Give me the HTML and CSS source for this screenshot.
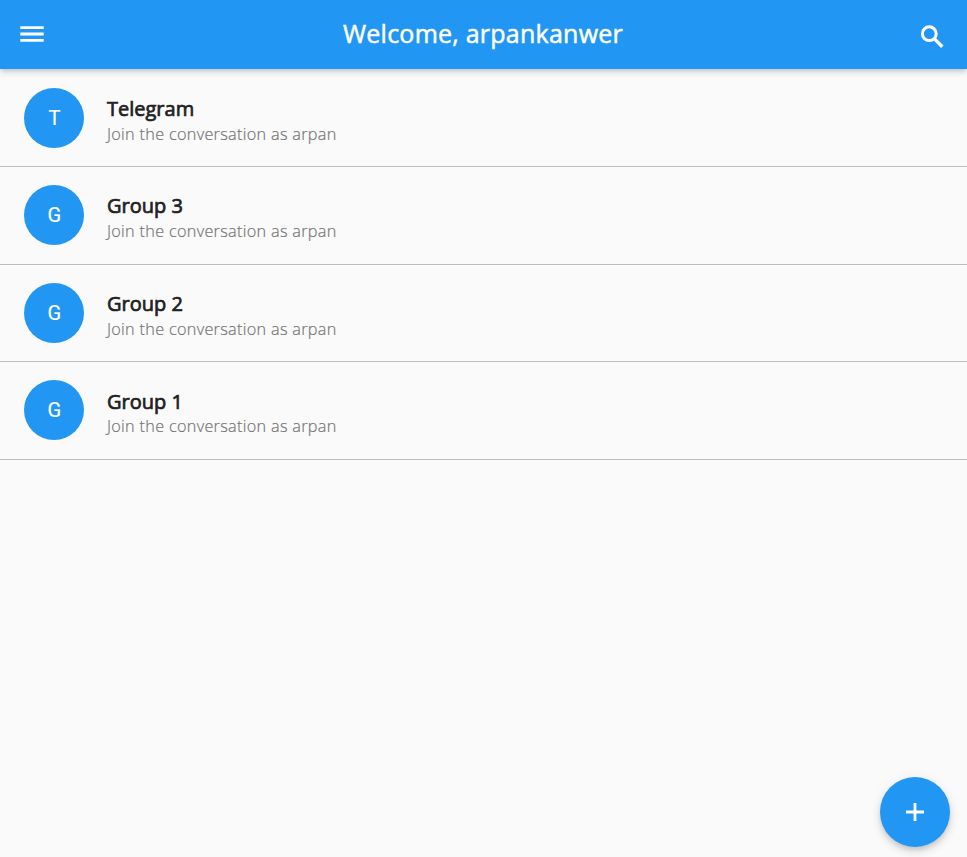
FILE: index.html
```html
<!DOCTYPE html>
<html lang="en">
<head>
<meta charset="utf-8">
<title>Groups</title>
<link rel="stylesheet" href="styles.css">
</head>
<body>
<header class="bar">
  <svg class="icon menu" viewBox="0 0 32 32"><path d="M4.300 8.200h23.400v2.800H4.300zM4.300 14.600h23.400v2.800H4.300zM4.300 21h23.400v2.800H4.300z"/></svg>
  <h1 class="title">Welcome, arpankanwer</h1>
  <svg class="icon search" viewBox="0 0 32 32"><g fill="none" stroke="currentColor" stroke-width="3"><circle cx="13.300" cy="12.700" r="6.900"/><path d="M18 17.400l8.300 8.300" stroke-width="3.400"/></g></svg>
</header>
<main class="list">
  <article class="row"><div class="avatar">T</div><div class="text"><h2 class="name">Telegram</h2><p class="sub">Join the conversation as arpan</p></div></article>
  <article class="row"><div class="avatar">G</div><div class="text"><h2 class="name">Group 3</h2><p class="sub">Join the conversation as arpan</p></div></article>
  <article class="row"><div class="avatar">G</div><div class="text"><h2 class="name">Group 2</h2><p class="sub">Join the conversation as arpan</p></div></article>
  <article class="row"><div class="avatar">G</div><div class="text"><h2 class="name">Group 1</h2><p class="sub">Join the conversation as arpan</p></div></article>
</main>
<button class="fab" aria-label="Add group"><svg class="icon plus" viewBox="0 0 30 30"><path d="M6 13.600h7.600V6h2.800v7.600H24v2.800h-7.600V24h-2.800v-7.600H6z"/></svg></button>
</body>
</html>
```
FILE: styles.css
```css
* { box-sizing: border-box; margin: 0; }
body { height: 857px; overflow: hidden; background: #fafafa; font-family: "Open Sans", sans-serif; }
.bar { position: relative; display: flex; align-items: center; justify-content: space-between; height: 69px; padding: 0 19px 2px 16px; background: #2196f3; color: #fff; box-shadow: 0 2px 4px -1px rgba(0,0,0,.13), 0 4px 6px rgba(0,0,0,.09), 0 1px 10px rgba(0,0,0,.06); }
.icon { display: block; fill: currentColor; }
.menu { width: 32px; height: 32px; margin-top: 1px; }
.search { width: 32px; height: 32px; margin-top: 7px; }
.title { padding: 0 0 2px 2px; font-size: 25px; line-height: 34px; font-weight: 400; letter-spacing: .24px; -webkit-text-stroke: .5px currentColor; }
.list { padding-top: .6px; }
.row { display: flex; align-items: center; gap: 22.600px; height: 97.600px; padding-left: 24.400px; border-bottom: 1px solid #bdbdbd; }
.avatar { width: 60px; height: 60px; margin-bottom: .6px; border-radius: 50%; background: #2196f3; color: #fff; font: 400 20px/60px Roboto, sans-serif; text-align: center; -webkit-text-stroke: .2px currentColor; }
.text { padding-top: 3.600px; }
.name { font-size: 20px; line-height: 27px; font-weight: 400; color: #212121; -webkit-text-stroke: .7px currentColor; }
.sub { margin-top: .8px; font-size: 16.250px; line-height: 22px; font-weight: 300; letter-spacing: .3px; color: #757575; -webkit-text-stroke: .2px currentColor; }
.fab { position: absolute; right: 17px; bottom: 10px; display: flex; align-items: center; justify-content: center; width: 70px; height: 70px; padding: 0; border: 0; border-radius: 50%; background: #2196f3; color: #fff; box-shadow: 0 3px 5px -1px rgba(0,0,0,.12), 0 5px 8px rgba(0,0,0,.1), 0 1px 14px rgba(0,0,0,.06); }
.plus { width: 30px; height: 30px; }
```
